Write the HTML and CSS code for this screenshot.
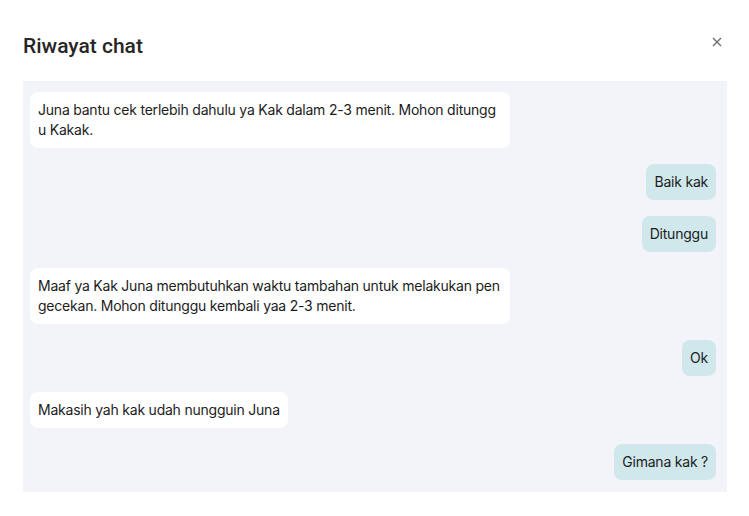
FILE: index.html
```html
<!DOCTYPE html>
<html lang="id">
<head>
<meta charset="utf-8">
<title>Riwayat chat</title>
<link rel="stylesheet" href="styles.css">
</head>
<body>
<div class="modal">
  <div class="header">
    <h1 class="title">Riwayat chat</h1>
    <button class="close" aria-label="Tutup">
      <svg width="10" height="10" viewBox="0 0 10 10"><path d="M1 1L9 9M9 1L1 9" stroke="#6b6b6b" stroke-width="1.3" fill="none"/></svg>
    </button>
  </div>
  <div class="chat">
    <div class="msg left">Juna bantu cek terlebih dahulu ya Kak dalam 2-3 menit. Mohon ditunggu Kakak.</div>
    <div class="msg right">Baik kak</div>
    <div class="msg right">Ditunggu</div>
    <div class="msg left">Maaf ya Kak Juna membutuhkan waktu tambahan untuk melakukan pengecekan. Mohon ditunggu kembali yaa 2-3 menit.</div>
    <div class="msg right">Ok</div>
    <div class="msg left">Makasih yah kak udah nungguin Juna</div>
    <div class="msg right">Gimana kak ?</div>
  </div>
</div>
</body>
</html>
```
FILE: styles.css
```css
* { box-sizing: border-box; }
html, body { margin: 0; padding: 0; background: #ffffff; }
body { width: 749px; height: 516px; overflow: hidden; font-family: Inter, "Noto Sans", sans-serif; color: #1c1c1c; }
.modal { padding: 24px 22px 0 23px; }
.header { display: flex; justify-content: space-between; align-items: flex-start; height: 57px; }
.title { margin: 8px 0 0 0; font-family: Roboto, "Noto Sans", sans-serif; font-size: 21px; font-weight: 500; line-height: 28px; color: #262626; }
.close { margin: 13px 5px 0 0; padding: 0; border: 0; background: none; width: 10px; height: 10px; display: flex; }
.chat { background: #f3f4f9; height: 411px; padding: 11px 11px 12px 7px; display: flex; flex-direction: column; gap: 16px; }
.msg { font-size: 14px; letter-spacing: -0.22px; line-height: 20px; padding: 8px; border-radius: 8px; max-width: 480px; word-break: break-all; }
.left { background: #ffffff; align-self: flex-start; }
.left:nth-child(1), .left:nth-child(4) { width: 480px; }
.right { background: #d0e8ec; align-self: flex-end; }
```
